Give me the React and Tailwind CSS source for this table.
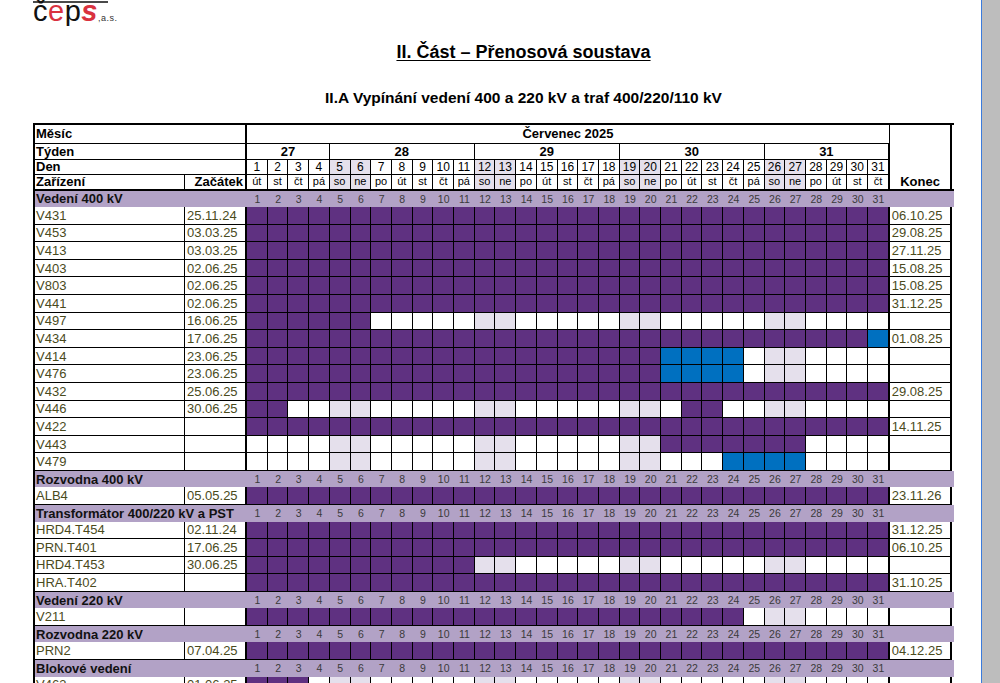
import React from "react";

const WEEKDAYS = [
  "út", "st", "čt", "pá", "so", "ne", "po",
  "út", "st", "čt", "pá", "so", "ne", "po",
  "út", "st", "čt", "pá", "so", "ne", "po",
  "út", "st", "čt", "pá", "so", "ne", "po",
  "út", "st", "čt",
];
const WEEKEND = [5, 6, 12, 13, 19, 20, 26, 27];
const DAYS = Array.from({ length: 31 }, (_, i) => i + 1);
const WEEKS = [
  { n: 27, w: "w-[82.84px]" },
  { n: 28, w: "w-[144.97px]" },
  { n: 29, w: "w-[144.97px]" },
  { n: 30, w: "w-[144.97px]" },
  { n: 31, w: "w-[124.25px]" },
];

const P = (n) => "P".repeat(n);
const E = (n) => ".".repeat(n);
const B = (n) => "B".repeat(n);
const FULL = P(31);

const sections = [
  {
    title: "Vedení 400 kV",
    rows: [
      ["V431", "25.11.24", FULL, "06.10.25"],
      ["V453", "03.03.25", FULL, "29.08.25"],
      ["V413", "03.03.25", FULL, "27.11.25"],
      ["V403", "02.06.25", FULL, "15.08.25"],
      ["V803", "02.06.25", FULL, "15.08.25"],
      ["V441", "02.06.25", FULL, "31.12.25"],
      ["V497", "16.06.25", P(6) + E(25), ""],
      ["V434", "17.06.25", P(30) + B(1), "01.08.25"],
      ["V414", "23.06.25", P(20) + B(4) + E(7), ""],
      ["V476", "23.06.25", P(20) + B(4) + E(7), ""],
      ["V432", "25.06.25", FULL, "29.08.25"],
      ["V446", "30.06.25", P(2) + E(19) + P(2) + E(8), ""],
      ["V422", "", FULL, "14.11.25"],
      ["V443", "", E(20) + P(7) + E(4), ""],
      ["V479", "", E(23) + B(4) + E(4), ""],
    ],
  },
  {
    title: "Rozvodna 400 kV",
    rows: [["ALB4", "05.05.25", FULL, "23.11.26"]],
  },
  {
    title: "Transformátor 400/220 kV a PST",
    rows: [
      ["HRD4.T454", "02.11.24", FULL, "31.12.25"],
      ["PRN.T401", "17.06.25", FULL, "06.10.25"],
      ["HRD4.T453", "30.06.25", P(11) + E(20), ""],
      ["HRA.T402", "", FULL, "31.10.25"],
    ],
  },
  {
    title: "Vedení 220 kV",
    rows: [["V211", "", P(24) + E(7), ""]],
  },
  {
    title: "Rozvodna 220 kV",
    rows: [["PRN2", "07.04.25", FULL, "04.12.25"]],
  },
  {
    title: "Blokové vedení",
    rows: [["V463", "01.06.25", P(3) + E(28), ""]],
  },
];

function cellColor(state, day) {
  if (state === "P") return "bg-[#5f3181]";
  if (state === "B") return "bg-[#0070c0]";
  return WEEKEND.includes(day) ? "bg-[#e5e0ec]" : "bg-white";
}

function SectionRow({ title }) {
  return (
    <div className="flex h-[16.5px] bg-[#b2a2c6] items-center">
      <div className="w-[212px] pl-[1px] text-[13px] font-bold leading-none text-[#111]">
        {title}
      </div>
      {DAYS.map((d) => (
        <div
          key={d}
          className="w-[20.71px] text-center text-[10.5px] leading-none text-[#3a3a3a]"
        >
          {d}
        </div>
      ))}
      <div className="w-[63px]" />
    </div>
  );
}

function DataRow({ name, start, pattern, end }) {
  return (
    <div className="flex h-[17.6px] text-[13px] leading-none text-[#4a4a1c]">
      <div className="w-[150px] border-r border-b border-black bg-white pl-[1px] flex items-center">
        {name}
      </div>
      <div className="w-[62px] border-r-2 border-b border-black bg-white pl-[2px] flex items-center">
        {start}
      </div>
      {DAYS.map((d) => (
        <div
          key={d}
          className={`w-[20.71px] border-r border-b border-black ${cellColor(pattern[d - 1], d)}`}
        />
      ))}
      <div className="w-[63px] border-l border-r-2 border-b border-black bg-white pl-[2px] flex items-center">
        {end}
      </div>
    </div>
  );
}

function Header() {
  return (
    <div className="flex border-b-2 border-black text-black">
      <div className="w-[212px] border-r-2 border-black flex flex-col text-[13px] font-bold leading-none">
        <div className="h-[18.5px] border-b border-black pl-[1px] flex items-center">Měsíc</div>
        <div className="h-[16px] border-b border-black pl-[1px] flex items-center">Týden</div>
        <div className="h-[15px] border-b border-black pl-[1px] flex items-center">Den</div>
        <div className="h-[14px] flex">
          <div className="w-[150px] border-r border-black pl-[1px] flex items-center">
            Zařízení
          </div>
          <div className="w-[60px] pr-[2px] flex items-center justify-end">Začátek</div>
        </div>
      </div>
      <div className="w-[642px] flex flex-col">
        <div className="h-[18.5px] border-b border-black flex items-center justify-center text-[13px] font-bold leading-none">
          Červenec 2025
        </div>
        <div className="h-[16px] border-b border-black flex">
          {WEEKS.map((w) => (
            <div
              key={w.n}
              className={`${w.w} border-r border-black flex items-center justify-center text-[13px] font-bold leading-none`}
            >
              {w.n}
            </div>
          ))}
        </div>
        <div className="h-[15px] border-b border-black flex">
          {DAYS.map((d) => (
            <div
              key={d}
              className={`w-[20.71px] border-r border-black flex items-center justify-center text-[12px] leading-none ${
                WEEKEND.includes(d) ? "bg-[#e5e0ec]" : "bg-white"
              }`}
            >
              {d}
            </div>
          ))}
        </div>
        <div className="h-[14px] flex">
          {DAYS.map((d) => (
            <div
              key={d}
              className={`w-[20.71px] border-r border-black flex items-center justify-center text-[11px] leading-none ${
                WEEKEND.includes(d) ? "bg-[#e5e0ec]" : "bg-white"
              }`}
            >
              {WEEKDAYS[d - 1]}
            </div>
          ))}
        </div>
      </div>
      <div className="w-[63px] border-l border-r-2 border-black flex items-end justify-center pb-[1px] text-[13px] font-bold leading-none">
        Konec
      </div>
    </div>
  );
}

function Logo() {
  return (
    <div className="ml-[33px] h-[26px] overflow-hidden">
      <div className="w-[75px] h-[2px] bg-[#4a4a4a] mt-[1px]" />
      <div className="flex items-baseline -mt-[6px] text-[29px] leading-none tracking-[0.5px]">
        <span className="text-[#111]">č</span>
        <span className="text-[#d9323f]">e</span>
        <span className="text-[#111]">p</span>
        <span className="text-[#d9323f] italic font-bold">s</span>
        <span className="text-[9px] text-[#333]">,a.s.</span>
      </div>
    </div>
  );
}

export default function App() {
  return (
    <div className="flex h-[683px] overflow-hidden font-['Liberation_Sans',Arial,sans-serif]">
      <div className="w-[981px] shrink-0 bg-white">
        <Logo />
        <div className="ml-[33px] w-[981px] mt-[16px] text-center text-[18px] font-bold leading-[21px] text-black">
          <span className="underline underline-offset-2">II. Část – Přenosová soustava</span>
        </div>
        <div className="ml-[33px] w-[981px] mt-[26px] text-center text-[15.5px] font-bold leading-[17px] text-black">
          II.A Vypínání vedení 400 a 220 kV a traf 400/220/110 kV
        </div>
        <div className="ml-[33px] mt-[17px] w-[921px] border-l-2 border-t-2 border-black">
          <Header />
          {sections.map((s) => (
            <React.Fragment key={s.title}>
              <SectionRow title={s.title} />
              {s.rows.map((r) => (
                <DataRow key={r[0]} name={r[0]} start={r[1]} pattern={r[2]} end={r[3]} />
              ))}
            </React.Fragment>
          ))}
        </div>
      </div>
      <div className="w-[1px] shrink-0 bg-[#3b7bdc]" />
      <div className="flex-1 bg-[#bdbdbd]" />
    </div>
  );
}
